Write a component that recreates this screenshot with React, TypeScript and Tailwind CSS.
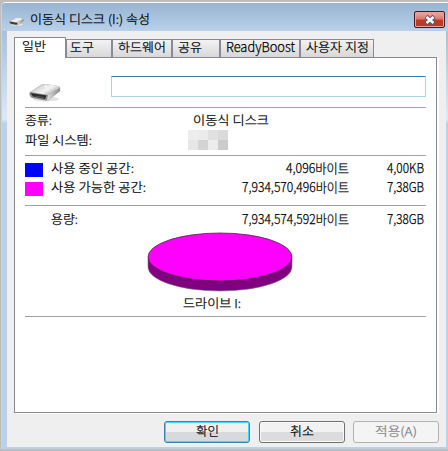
import type { ReactNode } from "react";

const tabs = [
  { label: "도구", box: "w-[46px] pl-[3px]", width: 24, size: 12 },
  { label: "하드웨어", box: "w-[60px] pl-[5px]", width: 48, size: 12 },
  { label: "공유", box: "w-[48px] pl-[5px]", width: 24, size: 12 },
  { label: "ReadyBoost", box: "w-[80px] pl-[5px]", width: 69, size: 13.5 },
  { label: "사용자 지정", box: "w-[74px] pl-[5px]", width: 63, size: 12 },
];

const mosaic = ["#ededed", "#ebebeb", "#e0e0e0", "#dadada", "#e6e6e6", "#d4d4d4", "#ececec", "#cbcbcb"];

type LabelProps = { w: number; children: string; size?: number; color?: string };

// Text scaled horizontally to a fixed width, like the narrow UI font
function Label({ w, children, size = 12, color = "#000" }: LabelProps) {
  return (
    <svg width={w} height="16" className="block shrink-0 overflow-visible">
      <text x="0" y="12" textLength={w} lengthAdjust="spacingAndGlyphs" fontSize={size} fill={color} stroke={color} strokeWidth=".25">
        {children}
      </text>
    </svg>
  );
}

function DriveIcon({ className }: { className: string }) {
  return (
    <svg viewBox="0 0 32 19" className={className}>
      <defs>
        <linearGradient id="top" x1="0" y1="0" x2="1" y2=".6">
          <stop offset="0" stopColor="#8f8f8f" />
          <stop offset=".4" stopColor="#dcdcdc" />
          <stop offset=".65" stopColor="#f4f4f4" />
          <stop offset="1" stopColor="#a4a4a4" />
        </linearGradient>
        <linearGradient id="side" x1="0" y1="0" x2="1" y2="0">
          <stop offset="0" stopColor="#e2e2e2" />
          <stop offset="1" stopColor="#8a8a8a" />
        </linearGradient>
      </defs>
      <ellipse cx="17" cy="16" rx="13" ry="2.500" fill="#e2e2e2" />
      <path d="M0.500 9.500 L12 2 Q14 1 16 1 L29 3 Q32 4 31 8 L21 16 Q19 18 16 17.500 L3 15 Q0 13 0.500 9.500Z" fill="#8e8e8e" />
      <path d="M1 9 L12 2 Q14 1 16 1 L29 3 L31 5 L19 12Z" fill="url(#top)" />
      <path d="M19 12 L31 5 V8 L21 16 L18 17.500Z" fill="url(#side)" />
      <path d="M1.500 10 L17.500 12.500 L16 16 L4 13.500Z" fill="#2a2a2a" />
      <path d="M6 13 L15 14.500" stroke="#555" strokeWidth="1" />
      <circle cx="17" cy="3.500" r="1" fill="#fff" />
    </svg>
  );
}

function Button({ className, children }: { className: string; children: ReactNode }) {
  return (
    <button className={`flex h-[22px] w-[86px] items-center justify-center rounded-[3px] border ${className}`}>{children}</button>
  );
}

type SpaceProps = { label: string; w: number; bytes: string; bw: number; size: string };

function Space({ label, w, bytes, bw, size }: SpaceProps) {
  return (
    <div className="flex h-[19px] w-[373px] items-center">
      <div className="flex-1">
        <Label w={w}>{label}</Label>
      </div>
      <Label w={bw} size={13}>{bytes}</Label>
      <div className="ml-[38px]">
        <Label w={37} size={13}>{size}</Label>
      </div>
    </div>
  );
}

export default function App() {
  return (
    <div className="flex h-[451px] w-[448px] flex-col overflow-hidden bg-[#bdbdbd] pt-[2px] pl-px font-['Noto_Sans_CJK_KR',sans-serif] text-xs font-light text-black">
      <div className="flex h-[447px] w-[447px] flex-col rounded-tl-[5px] border-t border-l border-t-white border-l-[#c9d3dc] bg-linear-to-b from-[#98b4d2] from-0% via-[#dce9f8] via-26% to-[#b9d1ea] to-27% pr-[2px] pl-[5px]">
        <header className="-mr-[2px] -ml-[5px] flex h-[28px] shrink-0 items-center justify-between rounded-tl-[4px] bg-linear-to-b from-[#98b4d2] to-[#b9d1ea] pr-[3px] pl-[7px]">
          <div className="flex items-center gap-[6px]">
            <DriveIcon className="mt-[8px] h-[9px] w-[15px]" />
            <div className="mt-[6px]">
              <Label w={120} size={12.5}>이동식 디스크 (I:) 속성</Label>
            </div>
          </div>
          <button className="mt-[5px] flex h-[17px] w-[31px] items-center justify-center rounded-[2px] border border-[#47191d] bg-linear-to-b from-[#e7ada3] from-0% via-[#d9796b] via-48% to-[#bd3b25] to-52% shadow-[inset_0_0_0_1px_#e5a49a]">
            <svg viewBox="0 0 12 10" className="h-[10px] w-[12px] overflow-visible">
              <path d="M2 1.500 L10 8.500 M10 1.500 L2 8.500" stroke="#59586b" strokeWidth="4.500" />
              <path d="M2.500 2 L9.500 8 M9.500 2 L2.500 8" stroke="#fff" strokeWidth="2.500" />
            </svg>
          </button>
        </header>

        <main className="flex h-[416px] w-[439px] shrink-0 flex-col bg-[#efefef] pt-[6px] pl-[7px]">
          <nav className="z-10 -mb-px flex h-[21px] items-end">
            <div className="h-[21px] w-[52px] border-t border-r border-l border-[#8a8996] bg-white pt-px pl-[7px]">
              <Label w={24}>일반</Label>
            </div>
            {tabs.map((t) => (
              <div key={t.label} className={`flex h-[19px] border border-[#8a8996] bg-linear-to-b from-[#f3f3f3] to-[#d8d8d8] ${t.box}`}>
                <Label w={t.width} size={t.size}>{t.label}</Label>
              </div>
            ))}
          </nav>

          <section className="flex h-[356px] w-[423px] shrink-0 flex-col border border-[#8a8996] bg-white pl-[10px] shadow-[2px_1px_0_#fff]">
            <div className="flex h-[50px] w-[401px] shrink-0 border-b border-[#a0a0a0] pl-[4px]">
              <DriveIcon className="mt-[25px] h-[19px] w-[32px]" />
              <input className="mt-[18px] ml-[50px] h-[21px] w-[315px] rounded-[1px] border border-[#a9d2eb] border-t-[#3d7bad] bg-white outline-none" />
            </div>
            <div className="flex h-[48px] w-[401px] shrink-0 flex-col border-b border-[#a0a0a0] pt-[5px]">
              <div className="flex h-[20px]">
                <div className="w-[168px]">
                  <Label w={27}>종류:</Label>
                </div>
                <Label w={76}>이동식 디스크</Label>
              </div>
              <div className="flex">
                <div className="w-[163px]">
                  <Label w={67}>파일 시스템:</Label>
                </div>
                <div className="-mt-[3px] grid h-[20px] w-[40px] grid-cols-4">
                  {mosaic.map((c, i) => (
                    <div key={i} style={{ backgroundColor: c }} />
                  ))}
                </div>
              </div>
            </div>
            <div className="flex h-[50px] w-[401px] shrink-0 flex-col border-b border-[#a0a0a0] pt-[3px]">
              <div className="flex items-center gap-[8px]">
                <div className="mt-[3px] h-[14px] w-[18px] shrink-0 bg-[#00f]" />
                <Space label="사용 중인 공간:" w={83} bytes="4,096바이트" bw={63} size="4,00KB" />
              </div>
              <div className="flex items-center gap-[8px]">
                <div className="mt-[3px] h-[14px] w-[18px] shrink-0 bg-[#f0f]" />
                <Space label="사용 가능한 공간:" w={95} bytes="7,934,570,496바이트" bw={107} size="7,38GB" />
              </div>
            </div>
            <div className="mt-[4px] pl-[26px]">
              <Space label="용량:" w={27} bytes="7,934,574,592바이트" bw={107} size="7,38GB" />
            </div>
            <svg viewBox="0 0 146 60" className="mt-[3px] ml-[122px] h-[60px] w-[146px] shrink-0">
              <path d="M1 26 V35 A72 24 0 0 0 145 35 V26Z" fill="#800080" stroke="#777" strokeWidth=".6" />
              <ellipse cx="73" cy="25" rx="72" ry="24" fill="#f0f" stroke="#403040" strokeWidth=".8" />
            </svg>
            <div className="flex h-[25px] w-[401px] shrink-0 border-b border-[#a0a0a0] pt-[4px] pl-[158px]">
              <Label w={58}>드라이브 I:</Label>
            </div>
          </section>

          <footer className="mt-[8px] flex gap-[9px] pl-[150px]">
            <Button className="border-[#3c7fb1] bg-linear-to-b from-[#f0f0f0] from-48% to-[#d6dadd] to-52% shadow-[inset_0_0_0_1px_#45d8fa]">
              <Label w={23}>확인</Label>
            </Button>
            <Button className="border-[#707070] bg-linear-to-b from-[#f2f2f2] from-48% to-[#dcdcdc] to-52% shadow-[inset_0_0_0_1px_#fafafa]">
              <Label w={24}>취소</Label>
            </Button>
            <Button className="-ml-px border-[#adb2b5] bg-[#f4f4f4]">
              <Label w={42} color="#838383">적용(A)</Label>
            </Button>
          </footer>
        </main>
      </div>
    </div>
  );
}
